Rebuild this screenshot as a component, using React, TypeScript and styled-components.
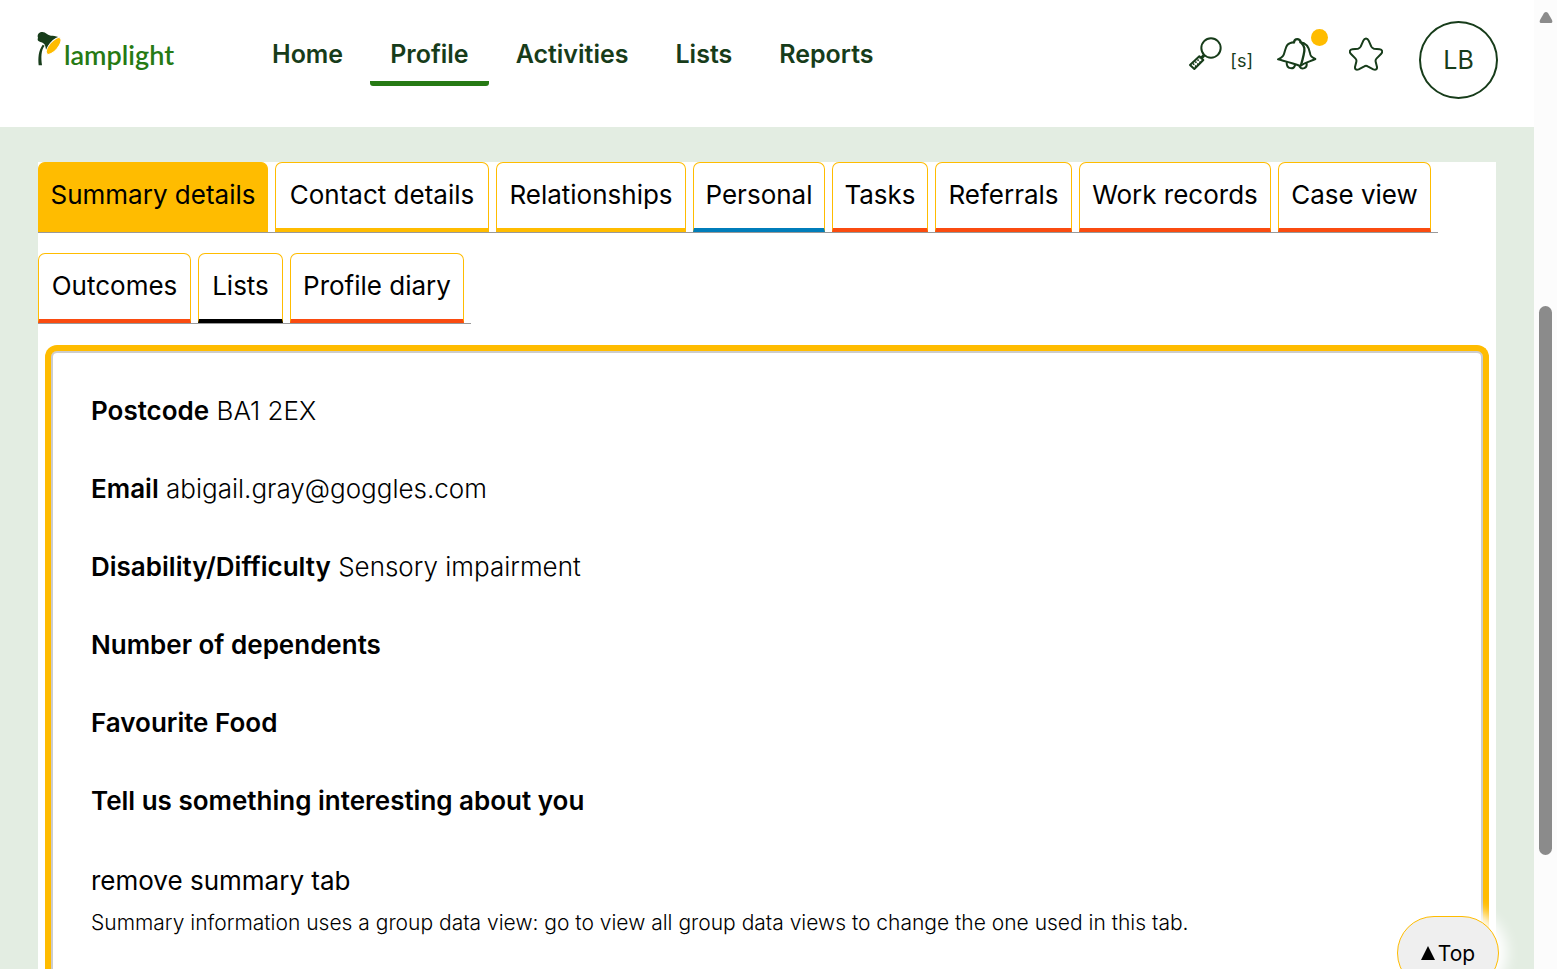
import React from "react";
import styled, { createGlobalStyle } from "styled-components";

const Global = createGlobalStyle`
  *, *::before, *::after { box-sizing: border-box; }
  body { margin: 0; background: #fff; color: #000; font-family: Inter, "Liberation Sans", sans-serif; }
  a { color: inherit; text-decoration: none; }
  button { font: inherit; cursor: pointer; }
`;

const amber = "#ffbc00";
const orange = "#fa4b10";
const deepGreen = "#173c1a";
const leafGreen = "#267a14";

const Shell = styled.div`
  display: flex;
  height: 100vh;
  overflow: hidden;
`;

const Page = styled.div`
  flex: 1;
  min-width: 0;
  display: flex;
  flex-direction: column;
  position: relative;
`;

const Header = styled.header`
  flex: none;
  display: flex;
  align-items: flex-start;
  height: 127px;
  padding: 0 36px;
  color: ${deepGreen};
`;

const Logo = styled.a`
  display: flex;
  width: 216px;
  padding-top: 31px;
  color: ${leafGreen};
  font-family: Lato, sans-serif;
  font-size: 27px;
  line-height: 48px;
  font-weight: 600;
`;

const Nav = styled.nav`
  display: flex;
  gap: 7px;
  padding-top: 33px;
`;

const NavLink = styled.a<{ $current?: boolean }>`
  padding: 0 20px 6px;
  height: 53px;
  font-size: 25px;
  line-height: 42px;
  font-weight: 600;
  border-bottom: 5px solid ${(p) => (p.$current ? leafGreen : "transparent")};
  border-radius: 0 0 3px 3px;
`;

const Tools = styled.div`
  display: flex;
  align-items: flex-start;
  margin-left: auto;
`;

const ToolButton = styled.button<{ $badged?: boolean }>`
  display: flex;
  align-items: flex-end;
  position: relative;
  margin: 37px 24px 0 0;
  padding: 0 ${(p) => (p.$badged ? 8 : 0)}px 0 0;
  border: 0;
  background: none;
  color: ${deepGreen};
`;

const Shortcut = styled.span`
  margin-left: 8px;
  font-size: 18px;
  line-height: 20px;
  font-weight: 400;
`;

const Dot = styled.span`
  position: absolute;
  top: -8px;
  right: -3px;
  width: 17px;
  height: 17px;
  border-radius: 50%;
  background: ${amber};
`;

const Avatar = styled.button`
  width: 79px;
  height: 78px;
  margin: 21px 0 0 12px;
  padding: 0;
  border: 2px solid ${deepGreen};
  border-radius: 50%;
  background: none;
  color: ${deepGreen};
  font-size: 25px;
  line-height: 72px;
`;

const Main = styled.main`
  flex: 1;
  min-height: 0;
  display: flex;
  padding: 35px 38px 0;
  background: #e3ede2;
`;

const Sheet = styled.div`
  flex: 1;
  min-width: 0;
  display: flex;
  flex-direction: column;
  background: #fff;
`;

const TabList = styled.ul`
  display: flex;
  flex-wrap: wrap;
  margin: 0;
  padding: 0;
  list-style: none;
`;

const TabItem = styled.li`
  margin-bottom: 20px;
  padding-right: 7px;
  border-bottom: 1px solid #999;
`;

const TabLink = styled.a<{ $accent: string; $width: number; $current?: boolean }>`
  display: block;
  min-width: ${(p) => p.$width}px;
  height: 70px;
  padding: 0 11px;
  font-size: 26px;
  line-height: 64px;
  text-align: center;
  border: 1px solid ${amber};
  border-bottom: 4px solid ${(p) => p.$accent};
  border-radius: 7px 7px 0 0;
  background: ${(p) => (p.$current ? amber : "#fff")};
`;

const Panel = styled.section`
  flex: 1;
  margin: 1px 7px 0;
  padding: 40px;
  border: 6px solid ${amber};
  border-bottom: 0;
  border-radius: 12px 12px 0 0;
  box-shadow: inset 0 2px 0 #ccc, inset 2px 0 0 #ccc, inset -2px 0 0 #ccc;
`;

const Field = styled.p`
  margin: 0 0 38px;
  font-size: 26px;
  line-height: 40px;
  font-weight: 300;
  strong { font-weight: 600; }
`;

const RemoveLink = styled.a`
  display: block;
  padding-top: 2px;
  font-size: 26px;
  line-height: 40px;
`;

const Note = styled.p`
  margin: 6px 0 0;
  font-size: 21px;
  line-height: 32px;
  font-weight: 300;
`;

const TopButton = styled.button`
  position: absolute;
  right: 35px;
  bottom: -21px;
  width: 102px;
  height: 74px;
  padding: 0;
  display: flex;
  align-items: center;
  justify-content: center;
  gap: 3px;
  border: 1px solid ${amber};
  border-radius: 38px;
  background: #efefef;
  color: #000;
  font-size: 21px;
  box-shadow: 0 0 14px 8px #fff;
`;

const ScrollTrack = styled.div`
  flex: none;
  display: flex;
  flex-direction: column;
  width: 23px;
  padding: 12px 5px 114px;
  background: #fcfcfc;
`;

const ScrollThumb = styled.div`
  flex: 1;
  width: 13px;
  margin-top: 283px;
  border-radius: 7px;
  background: #8b8b8b;
`;

const LampIcon = () => (
  <svg width="28" height="38" viewBox="0 0 84 114" aria-hidden="true">
    <path d="M8 103C6 80 7 60 20 41l6 3C15 58 15 78 18 103Z" fill={deepGreen} />
    <path d="M6 20C3 12 8 4 16 3c7-1 11 1 17 6 8 8 24 3 40 12L34 70c-4-9-4-16-6-24C26 38 21 35 13 33 6 30 3 27 6 20Z" fill={deepGreen} />
    <ellipse cx="53" cy="45" rx="31" ry="13" transform="rotate(-50 53 45)" fill={amber} stroke="#fff" strokeWidth="3" />
  </svg>
);

const SearchIcon = () => (
  <svg width="34" height="34" viewBox="0 0 102 102" fill="none" stroke={deepGreen} strokeWidth="6" aria-hidden="true">
    <circle cx="69" cy="33" r="29" />
    <path d="M48 55 39 64" strokeWidth="9" />
    <path d="M34 58 46 69 19 96 6 84Z" strokeLinejoin="round" />
    <path d="m15 83 21-19M21 89l21-19" strokeWidth="5" strokeDasharray="5 4" />
  </svg>
);

const BellIcon = () => (
  <svg width="40" height="34" viewBox="0 0 120 102" fill="none" stroke={deepGreen} strokeWidth="6" strokeLinejoin="round" strokeLinecap="round" aria-hidden="true">
    <path d="M51 16C28 18 28 28 23 44 20 56 18 60 3 67c22 6 42 10 67 20 12-10 32-14 45-21-12-6-15-9-16-18C96 32 88 18 70 16" />
    <path d="M51 16C53 3 68 4 71 15c13 14 13 22 9 38-3 14-4 18-8 31" strokeWidth="7" />
    <path d="M29 77c0 20 21 21 25 8M68 89c7 11 23 4 21-9" />
  </svg>
);

const StarIcon = () => (
  <svg width="34" height="34" viewBox="0 0 102 102" fill="none" stroke={deepGreen} strokeWidth="6" strokeLinejoin="round" aria-hidden="true">
    <path d="M43 11c4-9 12-9 16 0l8 18c2 4 4 5 8 6l17 2c8 1 10 8 4 14L83 64c-3 3-4 6-3 10l4 16c1 7-4 10-11 7L56 88c-3-2-7-2-10 0L29 97c-7 3-12 0-11-7l4-16c1-4 0-7-3-10L6 51c-6-6-4-13 4-14l17-2c4-1 6-2 8-6Z" />
  </svg>
);

const navItems = ["Home", "Profile", "Activities", "Lists", "Reports"];

const tabs = [
  { label: "Summary details", accent: amber, width: 230 },
  { label: "Contact details", accent: amber, width: 214 },
  { label: "Relationships", accent: amber, width: 190 },
  { label: "Personal", accent: "#007dba", width: 132 },
  { label: "Tasks", accent: orange, width: 96 },
  { label: "Referrals", accent: orange, width: 137 },
  { label: "Work records", accent: orange, width: 192 },
  { label: "Case view", accent: orange, width: 153 },
  { label: "Outcomes", accent: orange, width: 153 },
  { label: "Lists", accent: "#000", width: 85 },
  { label: "Profile diary", accent: orange, width: 174 },
];

const fields = [
  { label: "Postcode", value: "BA1 2EX" },
  { label: "Email", value: "abigail.gray@goggles.com" },
  { label: "Disability/Difficulty", value: "Sensory impairment" },
  { label: "Number of dependents", value: "" },
  { label: "Favourite Food", value: "" },
  { label: "Tell us something interesting about you", value: "" },
];

export default function App() {
  return (
    <Shell>
      <Global />
      <Page>
        <Header>
          <Logo href="#">
            <LampIcon />
            <span>lamplight</span>
          </Logo>
          <Nav>
            {navItems.map((item) => (
              <NavLink key={item} href="#" $current={item === "Profile"}>
                {item}
              </NavLink>
            ))}
          </Nav>
          <Tools>
            <ToolButton aria-label="Search">
              <SearchIcon />
              <Shortcut>[s]</Shortcut>
            </ToolButton>
            <ToolButton aria-label="Notifications" $badged>
              <BellIcon />
              <Dot />
            </ToolButton>
            <ToolButton aria-label="Favourites">
              <StarIcon />
            </ToolButton>
            <Avatar>LB</Avatar>
          </Tools>
        </Header>
        <Main>
          <Sheet>
            <TabList>
              {tabs.map((tab, i) => (
                <TabItem key={tab.label}>
                  <TabLink href="#" $accent={tab.accent} $width={tab.width} $current={i === 0}>
                    {tab.label}
                  </TabLink>
                </TabItem>
              ))}
            </TabList>
            <Panel>
              {fields.map((field) => (
                <Field key={field.label}>
                  <strong>{field.label}</strong> {field.value}
                </Field>
              ))}
              <RemoveLink href="#">remove summary tab</RemoveLink>
              <Note>
                Summary information uses a group data view: go to view all group data views to change the one used in this tab.
              </Note>
            </Panel>
          </Sheet>
        </Main>
        <TopButton>
          <svg width="14" height="14" viewBox="0 0 14 14" aria-hidden="true">
            <path d="M7 0 14 14H0Z" />
          </svg>
          Top
        </TopButton>
      </Page>
      <ScrollTrack>
        <svg width="14" height="11" viewBox="0 0 14 11" aria-hidden="true" display="block">
          <path d="M5 1q2-2 4 0l4 7q1 3-1 3H2Q0 11 1 8Z" fill="#8b8b8b" />
        </svg>
        <ScrollThumb />
      </ScrollTrack>
    </Shell>
  );
}
